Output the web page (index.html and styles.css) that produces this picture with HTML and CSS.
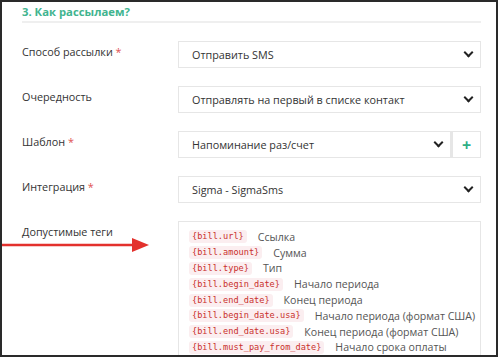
FILE: index.html
```html
<!DOCTYPE html>
<html lang="ru">
<head>
  <meta charset="UTF-8"/>
  <title>Как рассылаем</title>
  <link rel="stylesheet" href="styles.css">
</head>
<body>
  <div class="frame">
    <h3 class="section-title">3. Как рассылаем?</h3>

    <div class="form-row">
      <label>Способ рассылки <span class="req">*</span></label>
      <div class="field">
        <div class="select"><span>Отправить SMS</span><i class="chev"></i></div>
      </div>
    </div>

    <div class="form-row">
      <label>Очередность</label>
      <div class="field">
        <div class="select"><span>Отправлять на первый в списке контакт</span><i class="chev"></i></div>
      </div>
    </div>

    <div class="form-row">
      <label>Шаблон <span class="req">*</span></label>
      <div class="field group">
        <div class="select"><span>Напоминание раз/счет</span><i class="chev"></i></div>
        <div class="add-btn">+</div>
      </div>
    </div>

    <div class="form-row">
      <label>Интеграция <span class="req">*</span></label>
      <div class="field">
        <div class="select"><span>Sigma - SigmaSms</span><i class="chev"></i></div>
      </div>
    </div>

    <div class="form-row tags-row">
      <label>Допустимые теги</label>
      <div class="field">
        <div class="tags">
          <div class="tag"><code>{bill.url}</code> Ссылка</div>
          <div class="tag"><code>{bill.amount}</code> Сумма</div>
          <div class="tag"><code>{bill.type}</code> Тип</div>
          <div class="tag"><code>{bill.begin_date}</code> Начало периода</div>
          <div class="tag"><code>{bill.end_date}</code> Конец периода</div>
          <div class="tag"><code>{bill.begin_date.usa}</code> Начало периода (формат США)</div>
          <div class="tag"><code>{bill.end_date.usa}</code> Конец периода (формат США)</div>
          <div class="tag"><code>{bill.must_pay_from_date}</code> Начало срока оплаты</div>
          <div class="tag"><code>{bill.must_pay_to_date}</code> Конец срока оплаты</div>
        </div>
      </div>
    </div>

    <!-- annotation arrow -->
    <svg class="arrow" width="150" height="16" viewBox="0 0 150 16">
      <line x1="0" y1="8" x2="136" y2="8" stroke="#e3312d" stroke-width="2.4"/>
      <polygon points="132,1 149,8 132,15" fill="#e3312d"/>
    </svg>
  </div>
</body>
</html>
```

FILE: styles.css
```css
body {
  margin: 0;
  font-family: 'Open Sans', sans-serif;
  background: #fff;
  color: #333;
}

.frame {
  position: relative;
  width: 498px;
  height: 357px;
  box-sizing: border-box;
  border: 2px solid #2a2a2a;
  padding: 0 15px 0 20px;
  overflow: hidden;
}

.section-title {
  margin: 2px 0 0;
  padding-bottom: 1px;
  font-size: 11.3px;
  font-weight: 700;
  color: #41b48f;
  border-bottom: 2px solid #efefef;
  line-height: 16px;
}

.form-row {
  display: grid;
  grid-template-columns: 156px 303px;
  align-items: start;
  margin-top: 18px;
}

.form-row label {
  font-size: 10.8px;
  line-height: 20px;
  padding-top: 1px;
}

.req {
  color: #e05252;
}

.field.group {
  display: flex;
}

.select {
  flex: 1;
  height: 27px;
  box-sizing: border-box;
  border: 1px solid #e6e6e6;
  display: flex;
  align-items: center;
  justify-content: space-between;
  padding: 0 7px 0 13px;
  font-size: 10.8px;
  color: #333;
}

.chev {
  width: 5px;
  height: 5px;
  border-right: 2.5px solid #222;
  border-bottom: 2.5px solid #222;
  transform: rotate(45deg);
  margin-top: -4px;
  margin-right: 1px;
}

.add-btn {
  width: 30px;
  height: 27px;
  box-sizing: border-box;
  border: 1px solid #e6e6e6;
  border-left-width: 2px;
  color: #2fae86;
  font-size: 16px;
  font-weight: 700;
  display: flex;
  align-items: center;
  justify-content: center;
}

.tags {
  border: 1px solid #e6e6e6;
  padding: 7px 10px 6px 10px;
  height: 200px;
}

.tag {
  display: flex;
  align-items: center;
  height: 15.8px;
  font-size: 10.6px;
  color: #555;
  white-space: nowrap;
}

.tag code {
  font-family: 'DejaVu Sans Mono', monospace;
  font-size: 8.6px;
  line-height: 11px;
  color: #c9302c;
  background: #fbeef0;
  border-radius: 3px;
  padding: 1px 3px;
  margin-right: 11px;
}

.arrow {
  position: absolute;
  left: -2px;
  top: 235px;
}
```
